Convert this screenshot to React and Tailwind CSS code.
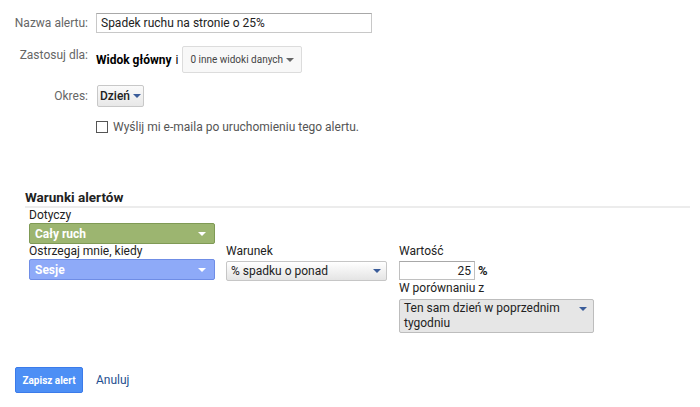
const Arrow = ({ className = 'border-t-[#444]' }) => (
  <span className={`inline-block w-0 h-0 border-l-[4px] border-r-[4px] border-t-[4px] border-l-transparent border-r-transparent ${className}`} />
);

const App = () => {
  return (
    <div className="w-[700px] h-[407px] bg-white overflow-hidden font-['Roboto',sans-serif] text-[12px] text-[#222]">
      {/* top form */}
      <div className="pt-[13px]">
        <div className="flex items-center h-[20px]">
          <div className="w-[88px] text-right text-[#666]">Nazwa alertu:</div>
          <input
            readOnly
            value="Spadek ruchu na stronie o 25%"
            className="ml-[8px] w-[276px] h-[20px] border border-[#c8c8c8] border-t-[#a8a8a8] px-[4px] text-[12px] text-[#222] outline-none"
          />
        </div>
        <div className="flex items-start mt-[13px] h-[27px]">
          <div className="w-[88px] text-right text-[#666] leading-[16px] pt-[1px]">Zastosuj dla:</div>
          <div className="ml-[8px] font-bold text-black leading-[16px] pt-[6px]">Widok główny</div>
          <div className="ml-[4px] text-black leading-[16px] pt-[6px]">i</div>
          <button className="ml-[4px] w-[120px] h-[27px] border border-[#dcdcdc] rounded-[2px] bg-[#f8f8f8] flex items-center justify-between pl-[7px] pr-[7px] text-[10px] text-[#444] whitespace-nowrap">
            <span>0 inne widoki danych</span>
            <Arrow className="border-t-[#666]" />
          </button>
        </div>
        <div className="flex items-center mt-[12px] h-[22px]">
          <div className="w-[88px] text-right text-[#666]">Okres:</div>
          <button className="ml-[9px] w-[47px] h-[22px] border border-[#c8c8c8] rounded-[2px] bg-gradient-to-b from-[#fafafa] to-[#e8e8e8] flex items-center justify-center gap-[3px] text-[12px] font-medium text-[#222]">
            <span>Dzień</span>
            <Arrow className="border-t-[#3a5c99]" />
          </button>
        </div>
        <div className="flex items-center mt-[14px] h-[12px] ml-[96px]">
          <span className="w-[12px] h-[12px] border border-[#555] bg-white" />
          <span className="ml-[5px] text-[#555]">Wyślij mi e-maila po uruchomieniu tego alertu.</span>
        </div>
      </div>

      {/* conditions */}
      <div className="mt-[55px] ml-[25px] w-[665px]">
        <div className="font-bold text-[13.5px] text-[#222] leading-[18px]">Warunki alertów</div>
        <div className="h-[2px] bg-[#ececec]" />
        <div className="flex pl-[4px]">
          <div className="w-[197px]">
            <div className="leading-[14px]">Dotyczy</div>
            <div className="mt-[1px] w-[186px] h-[21px] border border-[#7f9a55] rounded-[2px] bg-[#9cb570] flex items-center justify-between pl-[5px] pr-[8px] text-white font-bold text-[12px]">
              <span>Cały ruch</span>
              <Arrow className="border-t-white" />
            </div>
            <div className="leading-[14px]">Ostrzegaj mnie, kiedy</div>
            <div className="mt-[1px] w-[186px] h-[21px] border border-[#6f8de6] rounded-[2px] bg-[#8eaaf8] flex items-center justify-between pl-[5px] pr-[8px] text-white font-bold text-[12px]">
              <span>Sesje</span>
              <Arrow className="border-t-white" />
            </div>
          </div>
          <div className="w-[173px] pt-[36px]">
            <div className="leading-[14px]">Warunek</div>
            <div className="mt-[3px] w-[161px] h-[20px] border border-[#c6c6c6] rounded-[2px] bg-gradient-to-b from-[#ffffff] to-[#e4e4e4] flex items-center justify-between pl-[4px] pr-[5px] text-[12px] text-[#222]">
              <span>% spadku o ponad</span>
              <Arrow className="border-t-[#3a5c99]" />
            </div>
          </div>
          <div className="pt-[36px]">
            <div className="leading-[14px]">Wartość</div>
            <div className="flex items-center mt-[3px] h-[19px]">
              <div className="w-[76px] h-[19px] border border-[#c0c0c0] border-t-[#a8a8a8] text-right pr-[3px] leading-[18px]">25</div>
              <span className="ml-[3px] font-bold text-[13px]">%</span>
            </div>
            <div className="leading-[14px] mt-[1px]">W porównaniu z</div>
            <div className="mt-[4px] w-[195px] h-[34px] border border-[#bdbdbd] rounded-[2px] bg-[#e6e6e6] flex items-start justify-between pl-[4px] pr-[6px] pt-[1px] text-[12px] text-[#222] leading-[15px]">
              <span className="w-[165px]">Ten sam dzień w poprzednim tygodniu</span>
              <Arrow className="mt-[6px] border-t-[#3a5c99]" />
            </div>
          </div>
        </div>
      </div>

      {/* actions */}
      <div className="flex items-center mt-[34px] ml-[15px]">
        <button className="w-[68px] h-[26px] rounded-[2px] border border-[#3b7bea] bg-[#4d8ff5] text-white font-bold text-[10px]">
          Zapisz alert
        </button>
        <a className="ml-[13px] text-[#1f4f8f] text-[12px]">Anuluj</a>
      </div>
    </div>
  );
};

export default App;
